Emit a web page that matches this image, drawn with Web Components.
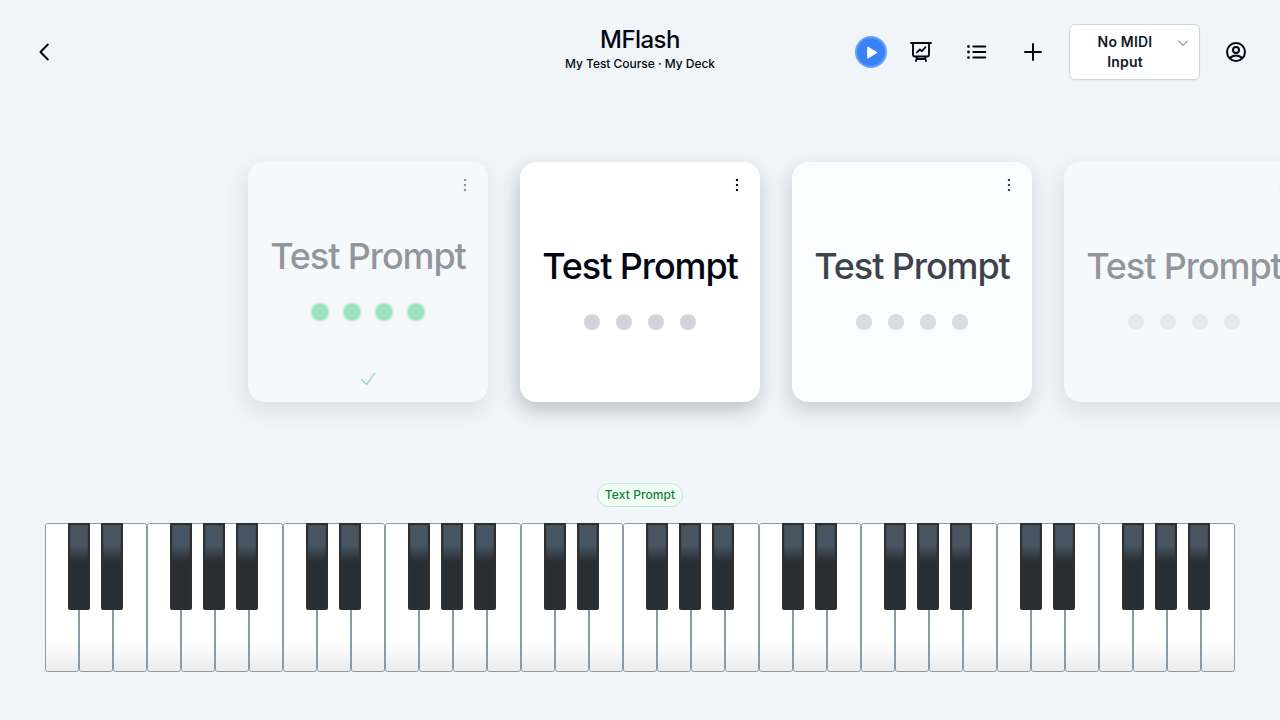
<!DOCTYPE html>
<html lang="en">
<head>
<meta charset="utf-8">
<title>MFlash</title>
<style>
html,body{height:100%}
body{margin:0;background:#f1f5f9;color:#030712;font-family:Inter,"Liberation Sans",sans-serif;overflow:hidden}
</style>
</head>
<body>
<mflash-app></mflash-app>
<script>
class Base extends HTMLElement{
  connectedCallback(){
    if(this.shadowRoot) return;
    this.attachShadow({mode:'open'}).innerHTML='<style>*{box-sizing:border-box}:host{box-sizing:border-box}</style>'+this.view();
  }
}
const ICONS={
  back:'<path d="M15.800 4.500L8.500 12l7.300 7.500" fill="none" stroke="currentColor" stroke-width="2" stroke-linecap="round" stroke-linejoin="round"/>',
  present:'<path d="M2 3h20M4 3v11.500a2 2 0 0 0 2 2h12a2 2 0 0 0 2-2V3M8 17l-1 4M16 17l1 4M7.500 19h9" fill="none" stroke="currentColor" stroke-width="1.900" stroke-linecap="round"/><path d="M7.900 12.300l3-2.800 2 1.600 3.600-3.900" fill="none" stroke="currentColor" stroke-width="1.800" stroke-linecap="round" stroke-linejoin="round"/>',
  list:'<path d="M8.300 6.500h12M8.300 12h12M8.300 17.600h12" fill="none" stroke="currentColor" stroke-width="2" stroke-linecap="round"/><path d="M3.500 6.500h.01M3.500 12h.01M3.500 17.600h.01" stroke="currentColor" stroke-width="2.800" stroke-linecap="round"/>',
  plus:'<path d="M12 4v16M4 12h16" fill="none" stroke="currentColor" stroke-width="2" stroke-linecap="round"/>',
  user:'<g fill="none" stroke="currentColor" stroke-width="2"><circle cx="12" cy="12" r="9"/><circle cx="12" cy="9.900" r="3"/><path d="M5.800 18.300c1.800-2.100 4-2.900 6.200-2.900s4.400.8 6.200 2.900"/></g>',
  more:'<path d="M11 6h2v2h-2zM11 11h2v2h-2zM11 16h2v2h-2z" fill="currentColor" stroke="currentColor" stroke-width=".15"/>',
  chevron:'<path d="M5.500 9l6.500 6.300L18.500 9" fill="none" stroke="currentColor" stroke-width="1.900" stroke-linecap="round" stroke-linejoin="round"/>',
  check:'<path d="M4.500 12.750l6 6 9-13.500" fill="none" stroke="currentColor" stroke-width="1.800" stroke-linecap="round" stroke-linejoin="round"/>',
  play:'<path d="M5 4.200v15.600a1.400 1.400 0 0 0 2.100 1.200l13-7.800a1.400 1.400 0 0 0 0-2.400L7.100 3a1.400 1.400 0 0 0-2.100 1.200z" fill="currentColor"/>'
};
customElements.define('ui-icon',class extends Base{view(){return `<style>:host{display:block;width:var(--size,24px);height:var(--size,24px);flex:none}svg{display:block;width:100%;height:100%}</style><svg viewBox="0 0 24 24" aria-hidden="true">${ICONS[this.getAttribute('name')]}</svg>`}});
customElements.define('play-button',class extends Base{view(){return `<style>:host{display:grid;place-items:center;width:32px;height:32px;border-radius:50%;background:#3b82f6;border:2px solid #60a5fa;color:#fff}ui-icon{--size:15px}</style><ui-icon name="play"></ui-icon>`}});
customElements.define('midi-select',class extends Base{view(){return `<style>:host{display:flex;width:131px;height:56px;padding:7px 8px 8px 9px;background:#fff;border:1px solid #d1d5db;border-radius:6px;box-shadow:0 1px 2px rgba(0,0,0,.05);font:600 14px/20px Inter,sans-serif;letter-spacing:.2px;color:#111827;text-align:center}
span{flex:1;padding:0 18px 0 8px}ui-icon{--size:16px;margin:3px 0 0 -6px;color:#9ca3af}</style><span><slot></slot></span><ui-icon name="chevron"></ui-icon>`}});
customElements.define('app-header',class extends Base{view(){return `<style>:host{display:grid;grid-template-columns:1fr auto 1fr;height:104px;align-items:center;padding:0 32px}
.titles{text-align:center;padding-bottom:8px}h1{margin:0;font-size:24px;line-height:32px;font-weight:500;letter-spacing:-.55px}p{margin:0;font-size:12px;line-height:16px;font-weight:500;letter-spacing:-.03px}
.actions{display:flex;align-items:center;justify-content:flex-end}.actions>*{flex:none}
.actions ui-icon{margin-left:32px}.actions ui-icon.first{margin-left:22px}midi-select{margin-left:24px}.actions ui-icon.user{margin-left:24px}</style>
<ui-icon name="back"></ui-icon><div class="titles"><h1>MFlash</h1><p>My Test Course · My Deck</p></div>
<div class="actions"><play-button></play-button><ui-icon class="first" name="present"></ui-icon><ui-icon name="list"></ui-icon><ui-icon name="plus"></ui-icon><midi-select>No MIDI Input</midi-select><ui-icon class="user" name="user"></ui-icon></div>`}});
customElements.define('flash-card',class extends Base{view(){const done=this.hasAttribute('done');return `<style>:host{display:grid;grid-template-rows:58px 1fr ${done?66:46}px;flex:none;width:240px;height:240px;border-radius:16px;background:#fff;box-shadow:-2px 8px 20px rgba(0,0,0,.22)}
.menu{display:flex;justify-content:flex-end;align-items:flex-start;padding:11px 11px 0 0}
.body{display:flex;flex-direction:column;align-items:center;justify-content:center;gap:28px}
.text{font-size:36px;line-height:40px;font-weight:500;letter-spacing:-1.100px;white-space:nowrap}
.dots{display:flex;gap:16px}.dots i{width:16px;height:16px;border-radius:50%;background:#d1d5db}
.done i{background:#20c964;box-shadow:0 0 0 2px #86efac}
.foot{display:flex;justify-content:center;padding-top:33px}.foot ui-icon{--size:20px;color:#22c55e}</style>
<div class="menu"><ui-icon name="more"></ui-icon></div><div class="body"><div class="text"><slot></slot></div><div class="dots ${done?'done':''}"><i></i><i></i><i></i><i></i></div></div><div class="foot">${done?'<ui-icon name="check"></ui-icon>':''}</div>`}});
customElements.define('card-row',class extends Base{view(){return `<style>:host{display:flex;gap:32px;padding:58px 0 0 248px;height:379px;overflow:hidden}</style><slot></slot>`}});
customElements.define('prompt-badge',class extends Base{view(){return `<style>:host{display:block;width:86px;text-align:center;margin:0 auto;padding:3px 0;font-size:12px;line-height:16px;font-weight:500;letter-spacing:.08px;white-space:nowrap;color:#15803d;background:#f0fdf4;border:1px solid #bfead0;border-radius:12px}</style><slot></slot>`}});
customElements.define('piano-octave',class extends Base{view(){return `<style>:host{display:grid;grid-template-columns:repeat(7,34px);position:relative;height:149px}
.w{background:linear-gradient(#fff 79%,#ececec);border:1px solid #8b9aa4;border-radius:2.500px}
.b{position:absolute;top:0;width:22px;height:87px;border:2px solid #2f2f2f;border-radius:0 0 2px 2px;background:linear-gradient(#485664 0,#485664 20px,#292e32 37px,#292e32);box-shadow:inset 0 0 0 1px rgba(41,46,50,.25)}</style>${'<div class="w"></div>'.repeat(7)}${[23,56,125,158,191].map(x=>`<div class="b" style="left:${x}px"></div>`).join('')}`}});
customElements.define('piano-keyboard',class extends Base{view(){return `<style>:host{display:flex;justify-content:center;padding-top:16px}</style>${'<piano-octave></piano-octave>'.repeat(5)}`}});
customElements.define('mflash-app',class extends Base{view(){return `<style>:host{display:block;height:720px;overflow:hidden}.dim{opacity:.4}.soft{opacity:.75}</style>
<app-header></app-header><card-row><flash-card class="dim" done>Test Prompt</flash-card><flash-card>Test Prompt</flash-card><flash-card class="soft">Test Prompt</flash-card><flash-card class="dim">Test Prompt</flash-card></card-row>
<prompt-badge>Text Prompt</prompt-badge><piano-keyboard></piano-keyboard>`}});
</script>
</body>
</html>
